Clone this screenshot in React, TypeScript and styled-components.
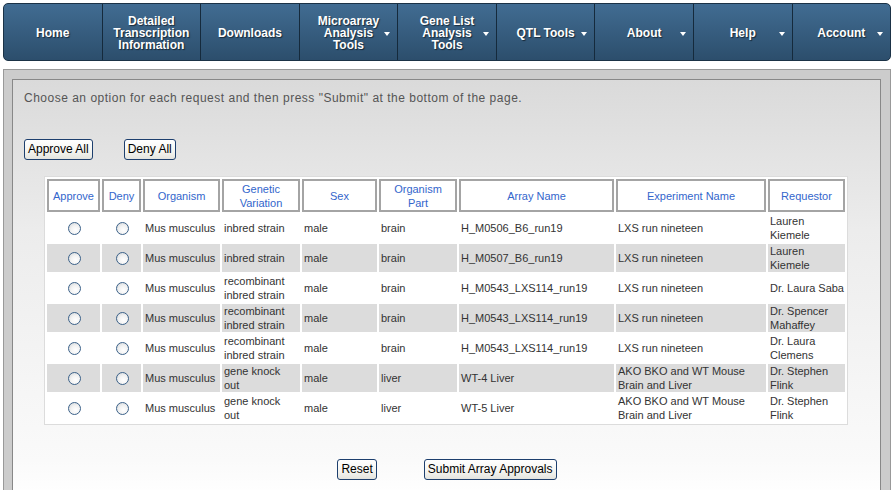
import React from "react";
import styled, { createGlobalStyle } from "styled-components";

const GlobalStyle = createGlobalStyle`
  html, body { margin: 0; padding: 0; background: #fff; }
  body { font-family: "Liberation Sans", Arial, sans-serif; }
  #root { padding: 3px; }
`;

const NavBar = styled.nav`
  display: flex;
  height: 58px;
  box-sizing: border-box;
  border: 1px solid #1b3246;
  border-radius: 5px;
  background: linear-gradient(#416c92, #2c4e6c);
  overflow: hidden;
`;

const NavItem = styled.div<{ $first?: boolean }>`
  flex: 1 1 0;
  position: relative;
  display: flex;
  align-items: center;
  justify-content: center;
  text-align: center;
  border-left: ${(p) => (p.$first ? "none" : "1px solid #152a3c")};
  color: #fff;
  font-family: "Liberation Sans", Arial, sans-serif;
  font-weight: bold;
  font-size: 12px;
  line-height: 12px;
  padding-top: 2px;
  text-shadow: 1px 1px 1px rgba(0, 0, 0, 0.55);
`;

const Caret = styled.span`
  position: absolute;
  right: 7px;
  top: 28px;
  width: 0;
  height: 0;
  border-left: 3.5px solid transparent;
  border-right: 3.5px solid transparent;
  border-top: 4px solid #fff;
`;

const Outer = styled.div`
  margin-top: 8px;
  border: 1px solid #999;
  border-bottom: none;
  background: #cccccc;
  padding: 9px 9px 0 8px;
`;

const Inner = styled.div`
  border: 1px solid #888;
  border-bottom: none;
  background: linear-gradient(#dadada 0px, #ececec 150px, #fafafa 380px, #ffffff 420px);
  padding: 11px 10px 12px 11px;
  min-height: 400px;
`;

const Intro = styled.p`
  margin: 0;
  font-size: 12px;
  line-height: 14px;
  letter-spacing: 0.5px;
  color: #555;
`;

const ButtonRow = styled.div<{ $center?: boolean; $gap: number; $top: number }>`
  display: flex;
  gap: ${(p) => p.$gap}px;
  justify-content: ${(p) => (p.$center ? "center" : "flex-start")};
  margin-top: ${(p) => p.$top}px;
`;

const Btn = styled.button`
  height: 21px;
  padding: 0 3px;
  border: 1px solid #1d3f6e;
  border-radius: 3px;
  background: linear-gradient(#ffffff, #f4f4f0 60%, #e4e4de);
  font-family: "Liberation Sans", Arial, sans-serif;
  font-size: 12px;
  color: #000;
  line-height: 19px;
`;

const Table = styled.table`
  margin: 16px 0 0 20px;
  width: 804px;
  table-layout: fixed;
  border-collapse: separate;
  border-spacing: 2px;
  border: 1px solid #dcdcdc;
  background: #fff;
  font-family: "Liberation Sans", Arial, sans-serif;
  font-size: 11px;
`;

const Col = styled.col<{ $w: number }>`
  width: ${(p) => p.$w}px;
`;

const Th = styled.th`
  border: 2px solid #a4a4a4;
  padding: 0 3px;
  height: 29px;
  font-weight: normal;
  color: #3366cc;
  line-height: 14px;
  text-align: center;
  background: #fff;
`;

const Tr = styled.tr<{ $alt: boolean }>`
  background: ${(p) => (p.$alt ? "#dcdcdc" : "transparent")};
`;

const Td = styled.td<{ $center?: boolean; $pr?: number }>`
  padding: 0 ${(p) => p.$pr ?? 1}px 0 2px;
  height: 28px;
  line-height: 14px;
  color: #333;
  text-align: ${(p) => (p.$center ? "center" : "left")};
  vertical-align: middle;
`;

const Radio = styled.input.attrs({ type: "radio" })`
  appearance: none;
  -webkit-appearance: none;
  width: 13px;
  height: 13px;
  margin: 3px 0 0;
  border: 1px solid #3b6189;
  border-radius: 50%;
  background: radial-gradient(circle at 60% 65%, #ffffff 0%, #f3f3f3 45%, #cfd3d6 100%);
  box-sizing: border-box;
`;

const columns: [string, number][] = [
  ["Approve", 53],
  ["Deny", 39],
  ["Organism", 77],
  ["Genetic Variation", 78],
  ["Sex", 75],
  ["Organism Part", 78],
  ["Array Name", 155],
  ["Experiment Name", 150],
  ["Requestor", 77],
];

type Row = { gv: string; part: string; array: string; exp: string; req: string };

const rows: Row[] = [
  { gv: "inbred strain", part: "brain", array: "H_M0506_B6_run19", exp: "LXS run nineteen", req: "Lauren Kiemele" },
  { gv: "inbred strain", part: "brain", array: "H_M0507_B6_run19", exp: "LXS run nineteen", req: "Lauren Kiemele" },
  { gv: "recombinant inbred strain", part: "brain", array: "H_M0543_LXS114_run19", exp: "LXS run nineteen", req: "Dr. Laura Saba" },
  { gv: "recombinant inbred strain", part: "brain", array: "H_M0543_LXS114_run19", exp: "LXS run nineteen", req: "Dr. Spencer Mahaffey" },
  { gv: "recombinant inbred strain", part: "brain", array: "H_M0543_LXS114_run19", exp: "LXS run nineteen", req: "Dr. Laura Clemens" },
  { gv: "gene knock out", part: "liver", array: "WT-4 Liver", exp: "AKO BKO and WT Mouse Brain and Liver", req: "Dr. Stephen Flink" },
  { gv: "gene knock out", part: "liver", array: "WT-5 Liver", exp: "AKO BKO and WT Mouse Brain and Liver", req: "Dr. Stephen Flink" },
];

const navItems: { label: React.ReactNode; caret: boolean }[] = [
  { label: "Home", caret: false },
  { label: <>Detailed<br />Transcription<br />Information</>, caret: false },
  { label: "Downloads", caret: false },
  { label: <>Microarray<br />Analysis<br />Tools</>, caret: true },
  { label: <>Gene List<br />Analysis<br />Tools</>, caret: true },
  { label: "QTL Tools", caret: true },
  { label: "About", caret: true },
  { label: "Help", caret: true },
  { label: "Account", caret: true },
];

export default function App() {
  return (
    <>
      <GlobalStyle />
      <NavBar>
        {navItems.map((n, i) => (
          <NavItem key={i} $first={i === 0}>
            <span>{n.label}</span>
            {n.caret && <Caret />}
          </NavItem>
        ))}
      </NavBar>
      <Outer>
        <Inner>
          <Intro>Choose an option for each request and then press "Submit" at the bottom of the page.</Intro>
          <ButtonRow $gap={31} $top={34}>
            <Btn>Approve All</Btn>
            <Btn>Deny All</Btn>
          </ButtonRow>
          <Table>
            <colgroup>
              {columns.map(([name, w]) => (
                <Col key={name} $w={w} />
              ))}
            </colgroup>
            <thead>
              <tr>
                {columns.map(([name]) => (
                  <Th key={name}>{name}</Th>
                ))}
              </tr>
            </thead>
            <tbody>
              {rows.map((r, i) => (
                <Tr key={i} $alt={i % 2 === 1}>
                  <Td $center><Radio name={`r${i}`} /></Td>
                  <Td $center><Radio name={`r${i}`} /></Td>
                  <Td>Mus musculus</Td>
                  <Td $pr={7}>{r.gv}</Td>
                  <Td>male</Td>
                  <Td>{r.part}</Td>
                  <Td>{r.array}</Td>
                  <Td>{r.exp}</Td>
                  <Td>{r.req}</Td>
                </Tr>
              ))}
            </tbody>
          </Table>
          <ButtonRow $center $gap={47} $top={34}>
            <Btn>Reset</Btn>
            <Btn>Submit Array Approvals</Btn>
          </ButtonRow>
        </Inner>
      </Outer>
    </>
  );
}
